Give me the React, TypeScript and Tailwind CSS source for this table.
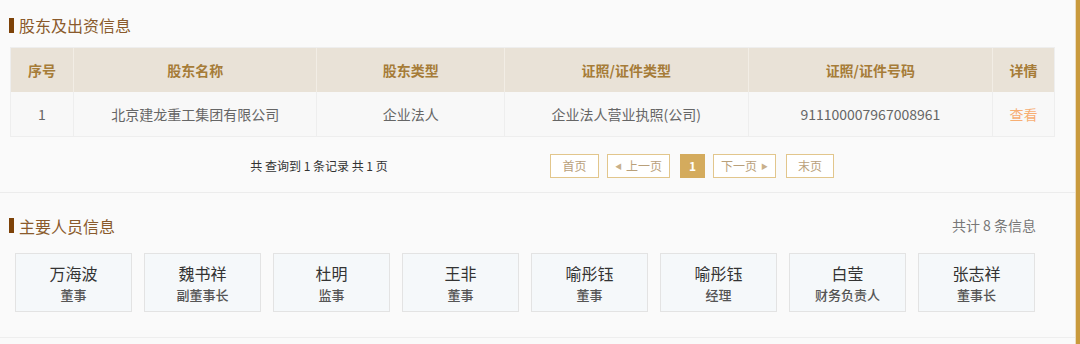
import React from "react"

const font = { fontFamily: '"Noto Sans CJK SC", "Noto Sans", sans-serif' }

interface Column {
  title: string
  width: string
}

const columns: Column[] = [
  { title: "序号", width: "w-[62px]" },
  { title: "股东名称", width: "w-[244px]" },
  { title: "股东类型", width: "w-[188px]" },
  { title: "证照/证件类型", width: "w-[244px]" },
  { title: "证照/证件号码", width: "w-[245px]" },
  { title: "详情", width: "w-[62px]" },
]

const people = [
  { name: "万海波", role: "董事" },
  { name: "魏书祥", role: "副董事长" },
  { name: "杜明", role: "监事" },
  { name: "王非", role: "董事" },
  { name: "喻彤钰", role: "董事" },
  { name: "喻彤钰", role: "经理" },
  { name: "白莹", role: "财务负责人" },
  { name: "张志祥", role: "董事长" },
]

const SectionTitle: React.FC<{ text: string }> = ({ text }) => (
  <div className="flex items-center h-[20px] pl-[9px]">
    <div className="w-[5px] h-[15px] bg-[#7d4208]" />
    <span className="ml-[5px] text-[16px] leading-[20px] text-[#8a5a2c]">{text}</span>
  </div>
)

const PageBtn: React.FC<{ children: React.ReactNode; className?: string }> = ({ children, className }) => (
  <div
    className={
      "h-[24px] flex items-center justify-center border border-[#e2c68c] text-[12px] text-[#b9a07a] bg-white " +
      (className ?? "")
    }
  >
    {children}
  </div>
)

const App: React.FC = () => {
  const row = ["1", "北京建龙重工集团有限公司", "企业法人", "企业法人营业执照(公司)", "911100007967008961"]

  return (
    <div className="w-[1080px] h-[344px] flex bg-[#fafafa] overflow-hidden" style={font}>
      <div className="flex-1 flex flex-col">
        {/* 股东及出资信息 */}
        <div className="mt-[15px]">
          <SectionTitle text="股东及出资信息" />
        </div>

        <div className="mt-[12px] ml-[10px] w-[1045px] border border-[#eeeeee]">
          <div className="flex h-[44px] bg-[#e9e2d7]">
            {columns.map((c, i) => (
              <div
                key={c.title}
                className={
                  c.width +
                  " flex items-center justify-center text-[14px] font-bold text-[#a67c38] " +
                  (i > 0 ? "border-l border-[#f2ede5]" : "")
                }
              >
                {c.title}
              </div>
            ))}
          </div>
          <div className="flex h-[44px] bg-[#f8f8f8]">
            {columns.map((c, i) => (
              <div
                key={c.title}
                className={
                  c.width +
                  " flex items-center justify-center text-[14px] " +
                  (i > 0 ? "border-l border-[#eeeeee] " : "") +
                  (i === 5 ? "text-[#f7ae73]" : "text-[#666666]")
                }
              >
                {i === 5 ? "查看" : row[i]}
              </div>
            ))}
          </div>
        </div>

        <div className="mt-[17px] flex items-center h-[24px]">
          <div className="w-[550px] pl-[88px] text-center text-[12px] text-[#333333]">共 查询到 1 条记录 共 1 页</div>
          <PageBtn className="w-[49px]">首页</PageBtn>
          <PageBtn className="w-[63px] ml-[8px] gap-[4px]">
            <span className="text-[7px] text-[#c9b08a]">◀</span>上一页
          </PageBtn>
          <div className="w-[25px] h-[24px] ml-[10px] flex items-center justify-center bg-[#d4ab5d] text-white text-[12px] font-bold">
            1
          </div>
          <PageBtn className="w-[63px] ml-[8px] gap-[4px]">
            下一页<span className="text-[7px] text-[#c9b08a]">▶</span>
          </PageBtn>
          <PageBtn className="w-[48px] ml-[10px]">末页</PageBtn>
        </div>

        <div className="mt-[14px] h-px bg-[#ececec]" />

        {/* 主要人员信息 */}
        <div className="mt-[22px] flex items-center justify-between pr-[39px]">
          <SectionTitle text="主要人员信息" />
          <span className="text-[14px] text-[#777777]">共计 8 条信息</span>
        </div>

        <div className="mt-[17px] ml-[15px] flex gap-[12px]">
          {people.map((p, i) => (
            <div
              key={i}
              className="w-[117px] h-[59px] border border-[#e3e3e3] bg-[#f5f8fa] flex flex-col items-center justify-center"
            >
              <div className="text-[16px] leading-[22px] text-[#333333]">{p.name}</div>
              <div className="mt-[2px] text-[13px] leading-[18px] font-medium text-[#555555]">{p.role}</div>
            </div>
          ))}
        </div>

        <div className="mt-[25px] h-px bg-[#eeeeee]" />
      </div>
      <div className="w-[5px] h-full border-l border-[#ecdcc0] bg-[#c99a3c]" />
    </div>
  )
}

export default App
